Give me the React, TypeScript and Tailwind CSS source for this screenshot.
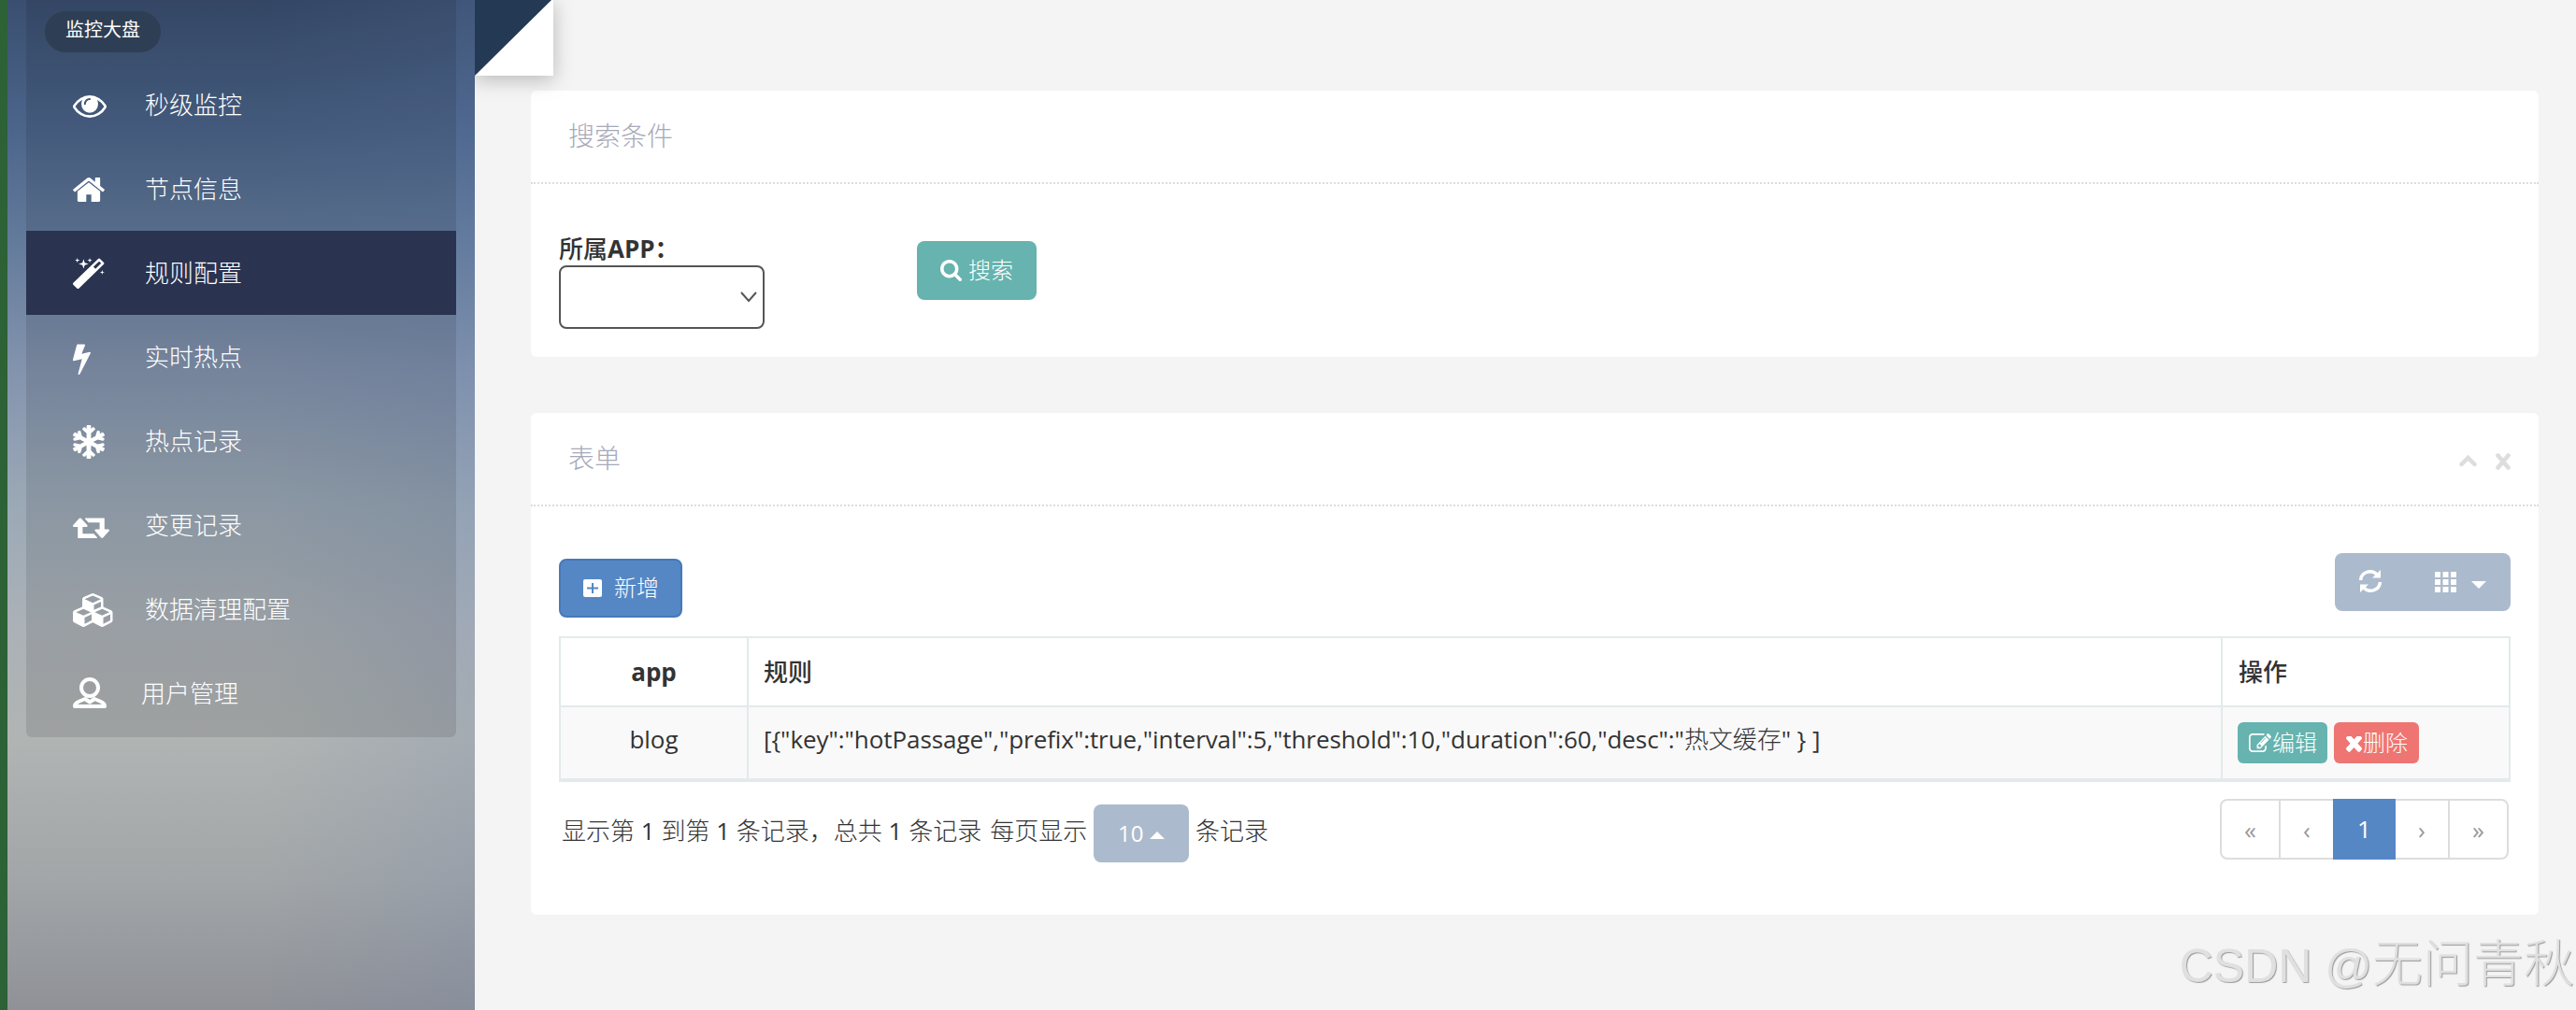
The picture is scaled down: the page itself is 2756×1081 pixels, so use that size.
import React from 'react';
import { FaSnowflake } from 'react-icons/fa';

type GlyphProps = { box: string; d: string; className: string };

const Glyph: React.FC<GlyphProps> = ({ box, d, className }) => (
  <svg viewBox={box} className={className} fill="currentColor" preserveAspectRatio="none">
    <path d={d} />
  </svg>
);

const paths = {
  eye: 'M1664 960q-152-236-381-353 61 104 61 225 0 185-131.5 316.5t-316.5 131.5-316.5-131.5-131.5-316.5q0-121 61-225-229 117-381 353 133 205 333.5 326.5t434.5 121.5 434.5-121.5 333.5-326.5zm-720-384q0-20-14-34t-34-14q-125 0-214.5 89.5t-89.5 214.5q0 20 14 34t34 14 34-14 14-34q0-86 61-147t147-61q20 0 34-14t14-34zm848 384q0 34-20 69-140 230-376.5 368.5t-499.5 138.5-499.5-139-376.5-368q-20-35-20-69t20-69q140-229 376.5-368t499.5-139 499.5 139 376.5 368q20 35 20 69z',
  home: 'M1472 992v480q0 26-19 45t-45 19h-384v-384h-256v384h-384q-26 0-45-19t-19-45v-480q0-1 .5-3t.5-3l575-474 575 474q1 2 1 6zm223-69l-62 74q-8 9-21 11h-3q-13 0-21-7l-692-577-692 577q-12 8-24 7-13-2-21-11l-62-74q-8-10-7-23.5t11-21.5l719-599q32-26 76-26t76 26l244 204v-195q0-14 9-23t23-9h192q14 0 23 9t9 23v408l219 182q10 8 11 21.5t-7 23.5z',
  magic: 'M1254 581l293-293-107-107-293 293zm447-293q0 27-18 45l-1286 1286q-18 18-45 18t-45-18l-198-198q-18-18-18-45t18-45l1286-1286q18-18 45-18t45 18l198 198q18 18 18 45zm-1351-190l98 30-98 30-30 98-30-98-98-30 98-30 30-98zm350 162l196 60-196 60-60 196-60-196-196-60 196-60 60-196zm930 478l98 30-98 30-30 98-30-98-98-30 98-30 30-98zm-640-640l98 30-98 30-30 98-30-98-98-30 98-30 30-98z',
  bolt: 'M1333 566q18 20 7 44l-540 1157q-13 25-42 25-4 0-14-2-17-5-25.5-19t-4.5-30l197-808-406 101q-4 1-12 1-18 0-31-11-18-15-13-39l201-825q4-14 16-23t28-9h328q19 0 32 12.5t13 29.5q0 8-5 18l-171 463 396-98q8-2 12-2 19 0 34 15z',
  retweet: 'M1280 1504q0 13-9.5 22.5t-22.5 9.5h-960q-8 0-13.5-2t-9-7-5.5-8-3-11.5-1-11.5v-600h-192q-26 0-45-19t-19-45q0-24 15-41l320-384q19-22 49-22t49 22l320 384q15 17 15 41 0 26-19 45t-45 19h-192v384h576q16 0 25 11l160 192q7 10 7 21zm640-416q0 24-15 41l-320 384q-20 23-49 23t-49-23l-320-384q-15-17-15-41 0-26 19-45t45-19h192v-384h-576q-16 0-25-12l-160-192q-7-9-7-20 0-13 9.5-22.5t22.5-9.5h960q8 0 13.5 2t9 7 5.5 8 3 11.5 1 11.5v600h192q26 0 45 19t19 45z',
  cubes: 'M640 1632l384-192v-314l-384 164v342zm-64-454l404-173-404-173-404 173zm1088 454l384-192v-314l-384 164v342zm-64-454l404-173-404-173-404 173zm-448-293l384-165v-266l-384 164v267zm-64-379l441-189-441-189-441 189zm1088 518v416q0 36-19 67t-52 47l-448 224q-25 14-57 14t-57-14l-448-224q-4-2-7-4-2 2-7 4l-448 224q-25 14-57 14t-57-14l-448-224q-33-16-52-47t-19-67v-416q0-38 21.5-70t56.5-48l434-186v-400q0-38 21.5-70t56.5-48l448-192q23-10 50-10t50 10l448 192q35 16 56.5 48t21.5 70v400l434 186q36 16 57 48t21 70z',
  search: 'M1216 832q0-185-131.5-316.5t-316.5-131.5-316.5 131.5-131.5 316.5 131.5 316.5 316.5 131.5 316.5-131.5 131.5-316.5zm512 832q0 52-38 90t-90 38q-54 0-90-38l-343-342q-179 124-399 124-143 0-273.5-55.5t-225-150-150-225-55.5-273.5 55.5-273.5 150-225 225-150 273.5-55.5 273.5 55.5 225 150 150 225 55.5 273.5q0 220-124 399l343 343q37 37 37 90z',
  times: 'M1490 1322q0 40-28 68l-136 136q-28 28-68 28t-68-28l-294-294-294 294q-28 28-68 28t-68-28l-136-136q-28-28-28-68t28-68l294-294-294-294q-28-28-28-68t28-68l136-136q28-28 68-28t68 28l294 294 294-294q28-28 68-28t68 28l136 136q28 28 28 68t-28 68l-294 294 294 294q28 28 28 68z',
  edit: 'M888 1184l116-116-152-152-116 116v56h96v96h56zm440-720q-16-16-33 1l-350 350q-17 17-1 33t33-1l350-350q17-17 1-33zm80 594v190q0 119-84.5 203.5t-203.5 84.5h-832q-119 0-203.5-84.5t-84.5-203.5v-832q0-119 84.5-203.5t203.5-84.5h832q63 0 117 25 15 7 18 23 3 17-9 29l-49 49q-14 14-32 8-23-6-45-6h-832q-66 0-113 47t-47 113v832q0 66 47 113t113 47h832q66 0 113-47t47-113v-126q0-13 9-22l64-64q15-15 35-7t20 29zm-96-738l288 288-672 672h-288v-288zm444 132l-92 92-288-288 92-92q28-28 68-28t68 28l152 152q28 28 28 68t-28 68z'
};

const menu = [
  { label: '秒级监控', icon: <Glyph box="0 384 1792 1152" d={paths.eye} className="w-9 h-6 mt-1" /> },
  { label: '节点信息', icon: <Glyph box="89 253 1614 1283" d={paths.home} className="w-[34px] h-[26px] mt-0.5" /> },
  { label: '规则配置', icon: <Glyph box="91 0 1637 1637" d={paths.magic} className="w-[34px] h-[33px]" />, active: true },
  { label: '实时热点', icon: <Glyph box="455 0 890 1792" d={paths.bolt} className="w-[19px] h-[35px] mt-0.5" /> },
  { label: '热点记录', icon: <FaSnowflake className="w-[34px] h-9 mt-0.5" preserveAspectRatio="none" /> },
  { label: '变更记录', icon: <Glyph box="0 256 1920 1280" d={paths.retweet} className="w-[39px] h-6 mt-1" /> },
  { label: '数据清理配置', icon: <Glyph box="0 0 2304 1792" d={paths.cubes} className="w-[45px] h-9 mt-0.5" /> },
  {
    label: '用户管理',
    icon: (
      <svg viewBox="0 0 36 33" className="w-9 h-[33px] -mt-0.5" fill="none" stroke="currentColor" strokeWidth="4" strokeLinejoin="round">
        <ellipse cx="18" cy="11" rx="9" ry="9" />
        <path d="M2 31h32c0-3-3-5-11-8l-5 3.500-5-3.500c-8 3-11 5-11 8z" />
      </svg>
    )
  }
];

const Sidebar: React.FC = () => (
  <aside className="w-[508px] shrink-0 border-l-8 border-[#2d6136] bg-[linear-gradient(to_right,rgba(100,120,175,0)_55%,rgba(100,125,175,0.16)_100%),linear-gradient(to_bottom,#3a4f70_0%,#4c658b_13%,#637b9b_24%,#8494ae_37%,#9ba9b6_50%,#abb1b7_62%,#b0b4b3_73%,#a2a6a8_87%,#8f9197_100%)] px-5 font-light">
    <div className="h-[789px] rounded-b-md bg-black/10 pt-3">
      <div className="ml-5 flex h-11 w-[124px] items-center justify-center rounded-full bg-[#2e3e54] pb-1 text-[20px] font-normal text-white">
        监控大盘
      </div>
      <nav className="mt-[11px]">
        {menu.map((item) => (
          <div
            key={item.label}
            className={`flex h-[90px] items-center pl-[50px] text-[26px] text-white ${item.active ? 'bg-[#2a3350]' : ''}`}
          >
            <span className={item.label === '用户管理' ? 'w-[73px]' : 'w-[77px]'}>{item.icon}</span>
            <span>{item.label}</span>
          </div>
        ))}
      </nav>
    </div>
  </aside>
);

const pageItem = 'flex items-center justify-center border-[#ddd] text-[#999]';

const App: React.FC = () => {
  return (
    <div className="relative flex h-[1081px] w-[2756px] overflow-hidden bg-[#f4f4f4] font-['Open_Sans','Noto_Sans_CJK_SC',sans-serif] font-normal text-[26px] leading-9 text-[#333]">
      <Sidebar />

      {/* Folded corner */}
      <div className="absolute left-[508px] top-0 h-[81px] w-[84px] bg-white shadow-[0_4px_20px_rgba(0,0,0,0.25)] [clip-path:inset(0_-30px_-30px_0)]">
        <svg viewBox="0 0 84 81" className="h-full w-full">
          <path d="M0 0h82L0 81z" fill="#243954" />
        </svg>
      </div>

      <main className="flex-1 pl-[60px] pr-10 pt-[97px]">
        {/* Search */}
        <section className="h-[285px] rounded-md bg-white">
          <div className="flex h-[100px] items-center border-b-2 border-dotted border-[#ddd] pb-0.5 pl-10 text-[28px] font-light text-[#a7a9b8]">
            搜索条件
          </div>
          <div className="flex pl-[30px]">
            <div className="w-[383px] pt-[51px]">
              <div className="h-9 font-bold">
                <span className="font-medium">所属</span>APP：
              </div>
              <div className="flex h-[68px] w-[220px] items-center justify-end rounded-lg border-2 border-[#555] pr-1.5">
                <svg viewBox="0 0 18 12" className="h-3 w-[18px]" fill="none" stroke="#555" strokeWidth="2">
                  <path d="M1 1l8 9 8-9" />
                </svg>
              </div>
            </div>
            <button className="mt-[61px] flex h-[63px] w-32 items-center rounded-lg bg-[#66b3af] pl-[25px] text-[24px] font-light text-white">
              <Glyph box="64 128 1664 1664" d={paths.search} className="mr-[7px] h-[23px] w-[23px]" />
              <span className="pb-0.5">搜索</span>
            </button>
          </div>
        </section>

        {/* Rule table */}
        <section className="mt-[60px] h-[537px] rounded-md bg-white">
          <div className="flex h-[100px] items-center border-b-2 border-dotted border-[#ddd] pl-10 pr-[30px] text-[28px] font-light text-[#a7a9b8]">
            <span className="flex-1 pb-0.5">表单</span>
            <svg viewBox="0 0 55 18" className="mt-1.5 h-[18px] w-[55px]" fill="none" stroke="#ddd" strokeWidth="4.500" strokeLinecap="round">
              <path d="M2.500 12l7-7 7 7" />
              <path d="M41.500 2.500l11 13M52.500 2.500l-11 13" />
            </svg>
          </div>
          <div className="px-[30px] pt-[50px]">
            <div className="flex items-start justify-between">
              <button className="mt-1.5 flex h-[63px] w-[132px] items-center rounded-lg border-2 border-[#4679b9] bg-[#5587c5] pl-6 text-[24px] font-light text-white">
                <svg viewBox="0 0 20 19" className="mr-[13px] h-[19px] w-5">
                  <rect width="20" height="19" rx="2" fill="#fff" />
                  <path d="M4 9.500h12M10 4v11" stroke="#5587c5" strokeWidth="2" />
                </svg>
                <span className="pb-0.5">新增</span>
              </button>
              <div className="flex h-[62px] w-[188px] rounded-lg bg-[#acbacd] pl-[26px] pt-[18px]">
                <svg viewBox="0 0 24 24" className="h-6 w-6" fill="none" stroke="#fff" strokeWidth="3.500">
                  <path d="M1.700 11a10 9.300 0 0 1 17.500-6" />
                  <path d="M22.300 13a10 9.300 0 0 1-17.500 6" />
                  <path d="M23 0v8.500h-9zM1 24v-8.500h9z" fill="#fff" stroke="none" />
                </svg>
                <svg viewBox="0 0 23 22" className="ml-[57px] mt-0.5 h-[22px] w-[23px]" fill="#fff">
                  <path d="M0 0h6v6h-6zM8.500 0h6v6h-6zM17 0h6v6h-6zM0 8h6v6h-6zM8.500 8h6v6h-6zM17 8h6v6h-6zM0 16h6v6h-6zM8.500 16h6v6h-6zM17 16h6v6h-6z" />
                </svg>
                <span className="ml-4 mt-3 h-0 w-0 border-x-8 border-t-8 border-x-transparent border-t-white" />
              </div>
            </div>

            <div className="mt-5 grid h-[156px] grid-cols-[201px_1577px_1fr] grid-rows-[74px_1fr] border-2 border-b-4 border-[#e4eaec]">
              <div className="flex items-center justify-center border-b-2 border-r-2 border-[#e4eaec] font-bold">app</div>
              <div className="flex items-center border-b-2 border-r-2 border-[#e4eaec] pl-4 font-medium">规则</div>
              <div className="flex items-center border-b-2 border-[#e4eaec] pl-[17px] font-medium">操作</div>
              <div className="flex items-start justify-center border-r-2 border-[#e4eaec] bg-[#f9f9f9] pt-4">blog</div>
              <div className="whitespace-pre border-r-2 border-[#e4eaec] bg-[#f9f9f9] pl-4 pt-4 tracking-[-0.07px]">
                {'[{"key":"hotPassage","prefix":true,"interval":5,"threshold":10,"duration":60,"desc":"'}
                <span className="font-light">热文缓存</span>
                {'" } ]'}
              </div>
              <div className="flex items-start gap-[7px] bg-[#f9f9f9] pl-4 pt-4 text-[24px] font-light text-white">
                <button className="flex h-11 w-24 items-center rounded-md bg-[#66b3af] pl-3">
                  <Glyph box="0 128 1792 1408" d={paths.edit} className="mr-px h-5 w-6" />
                  编辑
                </button>
                <button className="flex h-11 w-[91px] items-center rounded-md bg-[#ee7572] pl-[13px]">
                  <Glyph box="302 474 1188 1080" d={paths.times} className="mr-px mt-0.5 h-[17px] w-[17px]" />
                  删除
                </button>
              </div>
            </div>

            <div className="flex justify-between pl-[3px] pr-0.5">
              <div className="mt-6 flex h-[62px] items-center">
                <span className="w-[569px] whitespace-nowrap pb-1.5">
                  <span className="font-light">显示第</span> 1 <span className="font-light">到第</span> 1{' '}
                  <span className="font-light">条记录，总共</span> 1 <span className="font-light">条记录</span>
                  <span className="ml-[9px] font-light">每页显示</span>
                </span>
                <button className="mr-[7px] flex h-[62px] w-[102px] items-center rounded-lg bg-[#acbacd] pl-[26px] text-[24px] text-white">
                  10
                  <span className="ml-[7px] mt-1 h-0 w-0 border-x-8 border-b-8 border-x-transparent border-b-white" />
                </button>
                <span className="pb-1.5 font-light">条记录</span>
              </div>
              <div className="mt-[18px] flex h-[65px] text-[26px]">
                <span className={`${pageItem} w-[65px] rounded-l-lg border-2`}>«</span>
                <span className={`${pageItem} w-14 border-y-2`}>‹</span>
                <span className="flex w-[67px] items-center justify-center bg-[#5587c5] pb-0.5 text-white">1</span>
                <span className={`${pageItem} w-14 border-y-2`}>›</span>
                <span className={`${pageItem} w-[65px] rounded-r-lg border-2`}>»</span>
              </div>
            </div>
          </div>
        </section>
      </main>

      {/* Watermark */}
      <div className="absolute bottom-[15px] right-0.5 whitespace-nowrap font-['Liberation_Sans','Noto_Sans_CJK_SC',sans-serif] font-light text-[50px] leading-[64px] text-[#e0e0e0] [text-shadow:1px_1px_1px_#999]">
        CSDN @<span className="text-[54px]">无问青秋</span>
      </div>
    </div>
  );
};

export default App;
